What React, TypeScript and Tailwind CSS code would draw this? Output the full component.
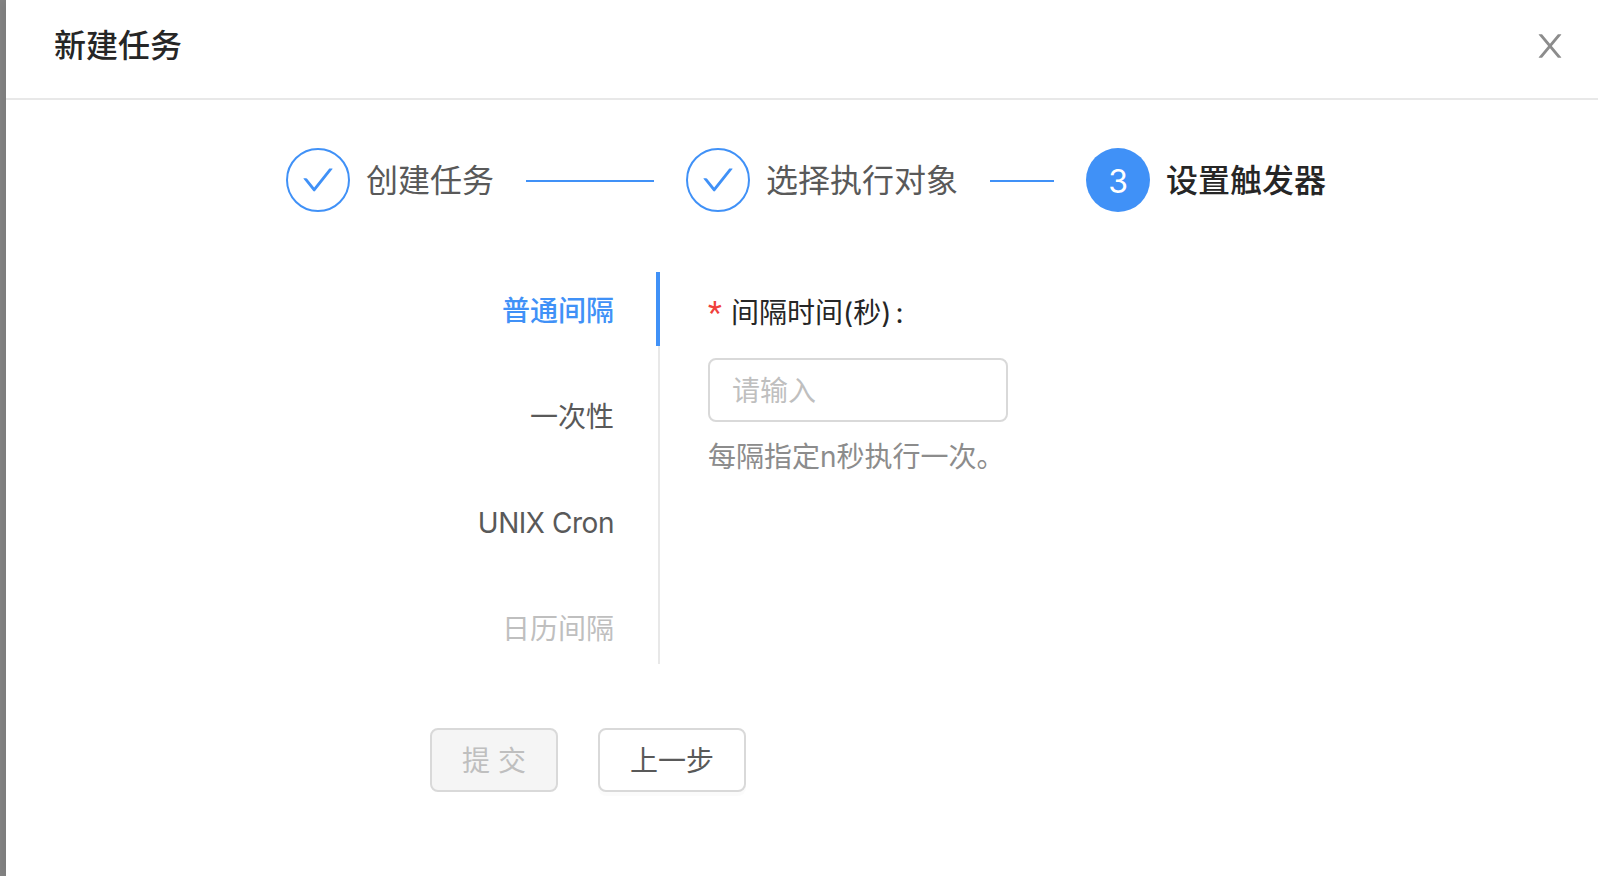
import React from "react";

type Step = { title: string; state: "done" | "current"; line?: string };

const steps: Step[] = [
  { title: "创建任务", state: "done", line: "w-32" },
  { title: "选择执行对象", state: "done", line: "w-16" },
  { title: "设置触发器", state: "current" },
];

const tabs = [
  { label: "普通间隔", style: "font-medium text-[#4091f7]" },
  { label: "一次性", style: "text-[#595959]" },
  { label: "UNIX Cron", style: "tracking-[-0.45px] text-[#595959]" },
  { label: "日历间隔", style: "text-[#bfbfbf]" },
];

function CheckIcon() {
  return (
    <svg viewBox="64 64 896 896" className="size-8" fill="currentColor">
      <path d="M912 190h-69.9c-9.8 0-19.1 4.5-25.1 12.2L404.7 724.5 207 474a32 32 0 0 0-25.1-12.2H112c-6.7 0-10.4 7.7-6.3 12.9l273.9 347c12.8 16.2 37.4 16.2 50.3 0l488.4-618.9c4.1-5.1.4-12.8-6.3-12.8z" />
    </svg>
  );
}

function CloseIcon() {
  return (
    <svg viewBox="64 64 896 896" className="size-8" fill="currentColor">
      <path d="M563.8 512l262.5-312.9c4.4-5.2.7-13.1-6.1-13.1h-79.8c-4.7 0-9.2 2.1-12.3 5.7L511.6 449.8 295.1 191.7c-3-3.6-7.5-5.7-12.3-5.7H203c-6.8 0-10.5 7.9-6.1 13.1L459.4 512 196.9 824.9A7.95 7.95 0 0 0 203 838h79.8c4.7 0 9.2-2.1 12.3-5.7l216.5-258.1 216.5 258.1c3 3.6 7.5 5.7 12.3 5.7h79.8c6.8 0 10.5-7.9 6.1-13.1L563.8 512z" />
    </svg>
  );
}

export default function App() {
  return (
    <div className="flex h-[876px] w-[1598px] overflow-hidden bg-[#858585] pl-1.5 font-['Inter','Noto_Sans_CJK_SC',sans-serif] text-[28px] leading-[44px]">
      <main className="flex-1 bg-white shadow-[-4px_0_10px_rgba(0,0,0,0.08)]">
        <header className="flex h-[100px] items-center justify-between border-b-2 border-[#e8e8e8] px-8 pb-1.5 pl-12">
          <h1 className="text-[32px] font-medium leading-[44px] text-[#262626]">新建任务</h1>
          <button className="text-[#8c8c8c]" aria-label="关闭">
            <CloseIcon />
          </button>
        </header>

        <ol className="flex items-center pl-[280px] pt-12">
          {steps.map((step, i) => (
            <li key={step.title} className="flex h-16 items-center">
              {step.state === "done" ? (
                <span className="flex size-16 items-center justify-center rounded-full border-2 border-[#4091f7] text-[#4091f7]">
                  <CheckIcon />
                </span>
              ) : (
                <span className="flex size-16 items-center justify-center rounded-full bg-[#4091f7] pt-[3px] text-[32px] text-white">
                  {i + 1}
                </span>
              )}
              <span
                className={
                  step.state === "done"
                    ? "ml-4 pt-0.5 text-[32px] leading-[60px] text-[#595959]"
                    : "ml-4 pt-0.5 text-[32px] font-medium leading-[60px] text-[#262626]"
                }
              >
                {step.title}
              </span>
              {step.line && <span className={`mx-8 mt-0.5 h-0.5 bg-[#4091f7] ${step.line}`} />}
            </li>
          ))}
        </ol>

        <section className="mt-[60px] flex">
          <ul className="flex w-[650px] flex-col gap-8 text-right">
            {tabs.map((tab) => (
              <li key={tab.label} className={`h-[74px] pr-[42px] leading-[78px] ${tab.style}`}>
                {tab.label}
              </li>
            ))}
          </ul>
          <div className="flex w-1 flex-col items-end">
            <span className="h-[74px] w-1 bg-[#4091f7]" />
            <span className="w-0.5 flex-1 bg-[#e8e8e8]" />
          </div>
          <div className="pl-12">
            <label className="mt-[19px] flex h-[43px] text-[#262626]">
              <span className="mr-2 w-[15px] font-['Roboto',sans-serif] text-[32px] leading-[43px] text-[#f0413c]">*</span>
              间隔时间(秒)<span className="ml-1">:</span>
            </label>
            <input
              className="mt-6 block h-16 w-[300px] rounded-lg border-2 border-[#d9d9d9] px-[22px] pt-0.5 outline-none placeholder:text-[#bfbfbf]"
              placeholder="请输入"
            />
            <p className="mt-[13px] text-[#8c8c8c]">每隔指定n秒执行一次。</p>
          </div>
        </section>

        <footer className="mt-16 flex gap-10 pl-[424px]">
          <button
            className="h-16 w-32 rounded-lg border-2 border-[#d9d9d9] bg-[#f5f5f5] pt-0.5 text-[#bfbfbf]"
            disabled
          >
            提 交
          </button>
          <button className="h-16 w-[148px] rounded-lg border-2 border-[#d9d9d9] bg-white pt-0.5 text-[#595959] shadow-[0_4px_0_rgba(0,0,0,0.016)]">
            上一步
          </button>
        </footer>
      </main>
    </div>
  );
}
